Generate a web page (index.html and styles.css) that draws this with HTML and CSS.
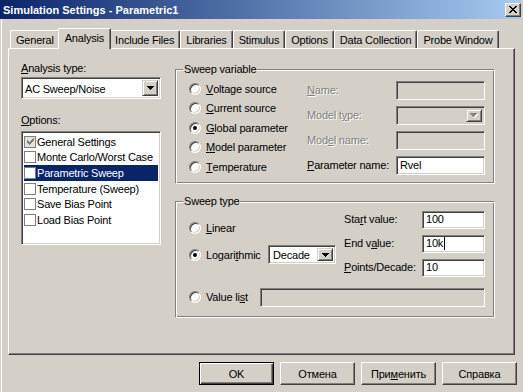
FILE: index.html
```html
<!DOCTYPE html>
<html>
<head>
    <meta charset="utf-8">
    <link rel="stylesheet" href="styles.css">
</head>
<body>
<div class="window">
    <div class="titlebar">
        <span class="title">Simulation Settings - Parametric1</span>
        <span class="close-btn">
            <svg width="8" height="7" viewBox="0 0 8 7" shape-rendering="crispEdges">
                <path d="M0 0h2v1h-2zM6 0h2v1h-2zM1 1h2v1h-2zM5 1h2v1h-2zM2 2h4v1h-4zM3 3h2v1h-2zM2 4h4v1h-4zM1 5h2v1h-2zM5 5h2v1h-2zM0 6h2v1h-2zM6 6h2v1h-2z" fill="#000"/>
            </svg>
        </span>
    </div>

    <div class="tabs">
        <div class="tab">General</div>
        <div class="tab tab-active">Analysis</div>
        <div class="tab">Include Files</div>
        <div class="tab">Libraries</div>
        <div class="tab">Stimulus</div>
        <div class="tab">Options</div>
        <div class="tab">Data Collection</div>
        <div class="tab">Probe Window</div>
    </div>

    <div class="panel">
        <div class="left-col">
            <div class="lbl"><u>A</u>nalysis type:</div>
            <div class="combo combo-analysis">
                <span class="combo-text">AC Sweep/Noise</span>
                <span class="combo-btn">
                    <svg width="7" height="4" viewBox="0 0 7 4" shape-rendering="crispEdges"><path d="M0 0h7v1h-7zM1 1h5v1h-5zM2 2h3v1h-3zM3 3h1v1h-1z" fill="#000"/></svg>
                </span>
            </div>
            <div class="lbl lbl-options"><u>O</u>ptions:</div>
            <div class="listbox">
                <div class="item">
                    <span class="chk chk-grey">
                        <svg width="7" height="7" viewBox="0 0 7 7" shape-rendering="crispEdges"><path d="M6 0h1v3h-1zM5 1h1v3h-1zM4 2h1v3h-1zM3 3h1v3h-1zM2 4h1v3h-1zM1 3h1v3h-1zM0 2h1v3h-1z" fill="#808080"/></svg>
                    </span>General Settings
                </div>
                <div class="item"><span class="chk"></span>Monte Carlo/Worst Case</div>
                <div class="item item-selected"><span class="chk"></span>Parametric Sweep</div>
                <div class="item"><span class="chk"></span>Temperature (Sweep)</div>
                <div class="item"><span class="chk"></span>Save Bias Point</div>
                <div class="item"><span class="chk"></span>Load Bias Point</div>
            </div>
        </div>

        <div class="right-col">
            <fieldset class="group group-var">
                <legend>Sweep variable</legend>
                <div class="var-body">
                    <div class="radios">
                        <div class="radio-row"><span class="radio"></span><u>V</u>oltage source</div>
                        <div class="radio-row"><span class="radio"></span><u>C</u>urrent source</div>
                        <div class="radio-row"><span class="radio radio-on"></span><u>G</u>lobal parameter</div>
                        <div class="radio-row"><span class="radio"></span><u>M</u>odel parameter</div>
                        <div class="radio-row"><span class="radio"></span><u>T</u>emperature</div>
                    </div>
                    <div class="fields">
                        <span class="flabel off"><u>N</u>ame:</span>
                        <span class="edit edit-off"></span>
                        <span class="flabel off">Model t<u>y</u>pe:</span>
                        <span class="combo combo-off">
                            <span class="combo-text"></span>
                            <span class="combo-btn">
                                <svg width="8" height="5" viewBox="0 0 8 5" shape-rendering="crispEdges"><path d="M1 1h7v1h-7zM2 2h5v1h-5zM3 3h3v1h-3zM4 4h1v1h-1z" fill="#fff"/><path d="M0 0h7v1h-7zM1 1h5v1h-5zM2 2h3v1h-3zM3 3h1v1h-1z" fill="#808080"/></svg>
                            </span>
                        </span>
                        <span class="flabel off">Mod<u>e</u>l name:</span>
                        <span class="edit edit-off"></span>
                        <span class="flabel"><u>P</u>arameter name:</span>
                        <span class="edit edit-param">Rvel</span>
                    </div>
                </div>
            </fieldset>

            <fieldset class="group group-type">
                <legend>Sweep type</legend>
                <div class="type-top">
                    <div class="type-modes">
                        <div class="radio-row"><span class="radio"></span><u>L</u>inear</div>
                        <div class="radio-row">
                            <span class="radio radio-on"></span>Logari<u>t</u>hmic
                            <span class="combo combo-decade">
                                <span class="combo-text">Decade</span>
                                <span class="combo-btn">
                                    <svg width="7" height="4" viewBox="0 0 7 4" shape-rendering="crispEdges"><path d="M0 0h7v1h-7zM1 1h5v1h-5zM2 2h3v1h-3zM3 3h1v1h-1z" fill="#000"/></svg>
                                </span>
                            </span>
                        </div>
                    </div>
                    <div class="type-fields">
                        <span class="flabel">Sta<u>r</u>t value:</span>
                        <span class="edit">100</span>
                        <span class="flabel">End v<u>a</u>lue:</span>
                        <span class="edit">10k<span class="caret"></span></span>
                        <span class="flabel"><u>P</u>oints/Decade:</span>
                        <span class="edit">10</span>
                    </div>
                </div>
                <div class="radio-row value-row">
                    <span class="radio"></span>Value li<u>s</u>t
                    <span class="edit edit-off edit-list"></span>
                </div>
            </fieldset>
        </div>
    </div>

    <div class="buttons">
        <div class="btn btn-default">OK</div>
        <div class="btn">Отмена</div>
        <div class="btn">При<u>м</u>енить</div>
        <div class="btn">Справка</div>
    </div>
</div>
</body>
</html>
```

FILE: styles.css
```css
/* classic dialog look */

* {
    box-sizing: border-box;
}

body {
    margin: 0;
    background: #d4d0c8;
    color: #000;
    font-family: "Liberation Sans", Arial, sans-serif;
    font-size: 11px;
    letter-spacing: -0.2px;
}

u {
    text-decoration: underline;
    text-underline-offset: 1px;
}

.window {
    width: 523px;
    height: 392px;
    padding-right: 2px;
    background: #d4d0c8;
    box-shadow: inset 1px 0 #d4d0c8, inset 2px 0 #fff;
    display: flex;
    flex-direction: column;
}

/* title bar */

.titlebar {
    height: 19px;
    display: flex;
    align-items: center;
    justify-content: space-between;
    background: linear-gradient(to right, #0a246a, #a6caf0);
}

.title {
    padding-left: 3px;
    color: #fff;
    font-weight: bold;
    font-size: 11px;
    letter-spacing: 0;
}

.close-btn {
    width: 16px;
    height: 14px;
    display: flex;
    align-items: center;
    justify-content: center;
    background: #d4d0c8;
    border: 1px solid;
    border-color: #fff #404040 #404040 #fff;
    box-shadow: inset -1px -1px #808080;
}

/* tabs */

.tabs {
    display: flex;
    align-items: flex-end;
    height: 20px;
    margin: 9px 0 0 10px;
}

.tab {
    height: 18px;
    padding: 3px 5px 0;
    line-height: 13px;
    white-space: nowrap;
    border: 1px solid;
    border-bottom: none;
    border-color: #fff #404040 #fff #fff;
    border-radius: 2px 2px 0 0;
    box-shadow: inset -1px 0 #808080;
}

.tab-active {
    position: relative;
    z-index: 1;
    height: 21px;
    margin: 0 -2px -1px;
    padding: 3px 6px 0;
    background: #d4d0c8;
}

/* tab page */

.panel {
    width: 507px;
    height: 307px;
    margin-left: 8px;
    padding: 13px 0 0 12px;
    border: 1px solid;
    border-color: #fff #404040 #404040 #fff;
    box-shadow: inset -1px -1px #808080;
    display: grid;
    grid-template-columns: 140px 320px;
    column-gap: 14px;
    align-items: start;
}

.lbl {
    line-height: 13px;
}

.lbl-options {
    margin-top: 15px;
}

/* sunken fields */

.edit,
.combo,
.listbox {
    border: 1px solid;
    border-color: #808080 #fff #fff #808080;
    box-shadow: inset 1px 1px #404040, inset -1px -1px #d4d0c8;
    background: #fff;
}

.edit {
    height: 19px;
    padding: 2px 3px 0;
    line-height: 13px;
    white-space: nowrap;
}

.edit-off {
    background: #d4d0c8;
}

.caret {
    display: inline-block;
    width: 1px;
    height: 13px;
    margin-left: 1px;
    vertical-align: top;
    background: #000;
}

.combo {
    display: flex;
    align-items: stretch;
    padding: 2px;
}

.combo-text {
    flex: 1;
    padding-left: 1px;
    line-height: 16px;
    white-space: nowrap;
}

.combo-btn {
    width: 16px;
    display: flex;
    align-items: center;
    justify-content: center;
    background: #d4d0c8;
    border: 1px solid;
    border-color: #d4d0c8 #404040 #404040 #d4d0c8;
    box-shadow: inset 1px 1px #fff, inset -1px -1px #808080;
}

.combo-analysis {
    width: 140px;
    height: 22px;
    margin-top: 2px;
}

.combo-analysis .combo-text {
    line-height: 18px;
}

.combo-off {
    height: 19px;
    background: #d4d0c8;
}

.combo-decade {
    width: 68px;
    height: 19px;
    margin: 0 8px 0 auto;
}

.combo-decade .combo-text {
    padding-left: 2px;
    line-height: 15px;
}

/* options list */

.listbox {
    width: 140px;
    height: 114px;
    margin-top: 4px;
    padding: 2px;
}

.item {
    height: 15.6px;
    display: flex;
    align-items: center;
    white-space: nowrap;
    overflow: hidden;
}

.item-selected {
    background: #0a246a;
    color: #fff;
}

.chk {
    width: 12px;
    height: 12px;
    margin-right: 1px;
    flex: none;
    border: 1px solid #808080;
    background: #fff;
    display: flex;
    align-items: center;
    justify-content: center;
}

.chk-grey {
    background: #e4e2dd;
}

/* group boxes */

.right-col {
    margin-top: 1px;
}

.group {
    margin: 0;
    min-width: 0;
    padding: 3px 9px 6px 13px;
    border: 1px solid;
    border-color: #808080 #fff #fff #808080;
    box-shadow: inset 1px 1px #fff, inset -1px -1px #808080;
}

.group legend {
    margin-left: -6px;
    padding: 0 1px;
    line-height: 13px;
    background: #d4d0c8;
}

.group-type {
    margin-top: 11px;
    padding-bottom: 10px;
}

.var-body {
    display: flex;
}

.radios {
    width: 118px;
}

.radio-row {
    height: 19.5px;
    display: flex;
    align-items: center;
    white-space: nowrap;
}

.radio {
    width: 12px;
    height: 12px;
    margin-right: 5px;
    flex: none;
    border-radius: 50%;
    border: 1px solid;
    border-color: #808080 #fff #fff #808080;
    box-shadow: inset 1px 1px #404040, inset -1px -1px #d4d0c8;
    background: #fff;
    display: flex;
    align-items: center;
    justify-content: center;
}

.radio-on::after {
    content: "";
    width: 4px;
    height: 4px;
    border-radius: 50%;
    background: #000;
}

.fields {
    margin-top: 2px;
    display: grid;
    grid-template-columns: 89px 89px;
    grid-auto-rows: 19px;
    row-gap: 6px;
    align-items: center;
}

.flabel {
    line-height: 13px;
    white-space: nowrap;
}

.off {
    color: #808080;
    text-shadow: 1px 1px #fff;
}

.type-top {
    display: flex;
}

.type-modes {
    width: 155px;
    padding-top: 7px;
    display: flex;
    flex-direction: column;
    gap: 7px;
}

.type-modes .radio-row {
    height: 20px;
}

.type-fields {
    display: grid;
    grid-template-columns: 78px 63px;
    grid-auto-rows: 18px;
    row-gap: 6px;
    align-items: center;
}

.type-fields .edit {
    height: 18px;
    padding-top: 1px;
}

.value-row {
    margin-top: 11px;
}

.edit-list {
    width: 225px;
    margin-left: auto;
}

/* bottom buttons */

.buttons {
    display: flex;
    justify-content: flex-end;
    gap: 6px;
    margin-top: 7px;
    padding-right: 4px;
}

.btn {
    width: 75px;
    height: 23px;
    display: flex;
    align-items: center;
    justify-content: center;
    border: 1px solid;
    border-color: #fff #404040 #404040 #fff;
    box-shadow: inset -1px -1px #808080;
}

.btn-default {
    border-color: #000;
    box-shadow: inset 1px 1px #fff, inset -1px -1px #404040, inset -2px -2px #808080;
}
```
